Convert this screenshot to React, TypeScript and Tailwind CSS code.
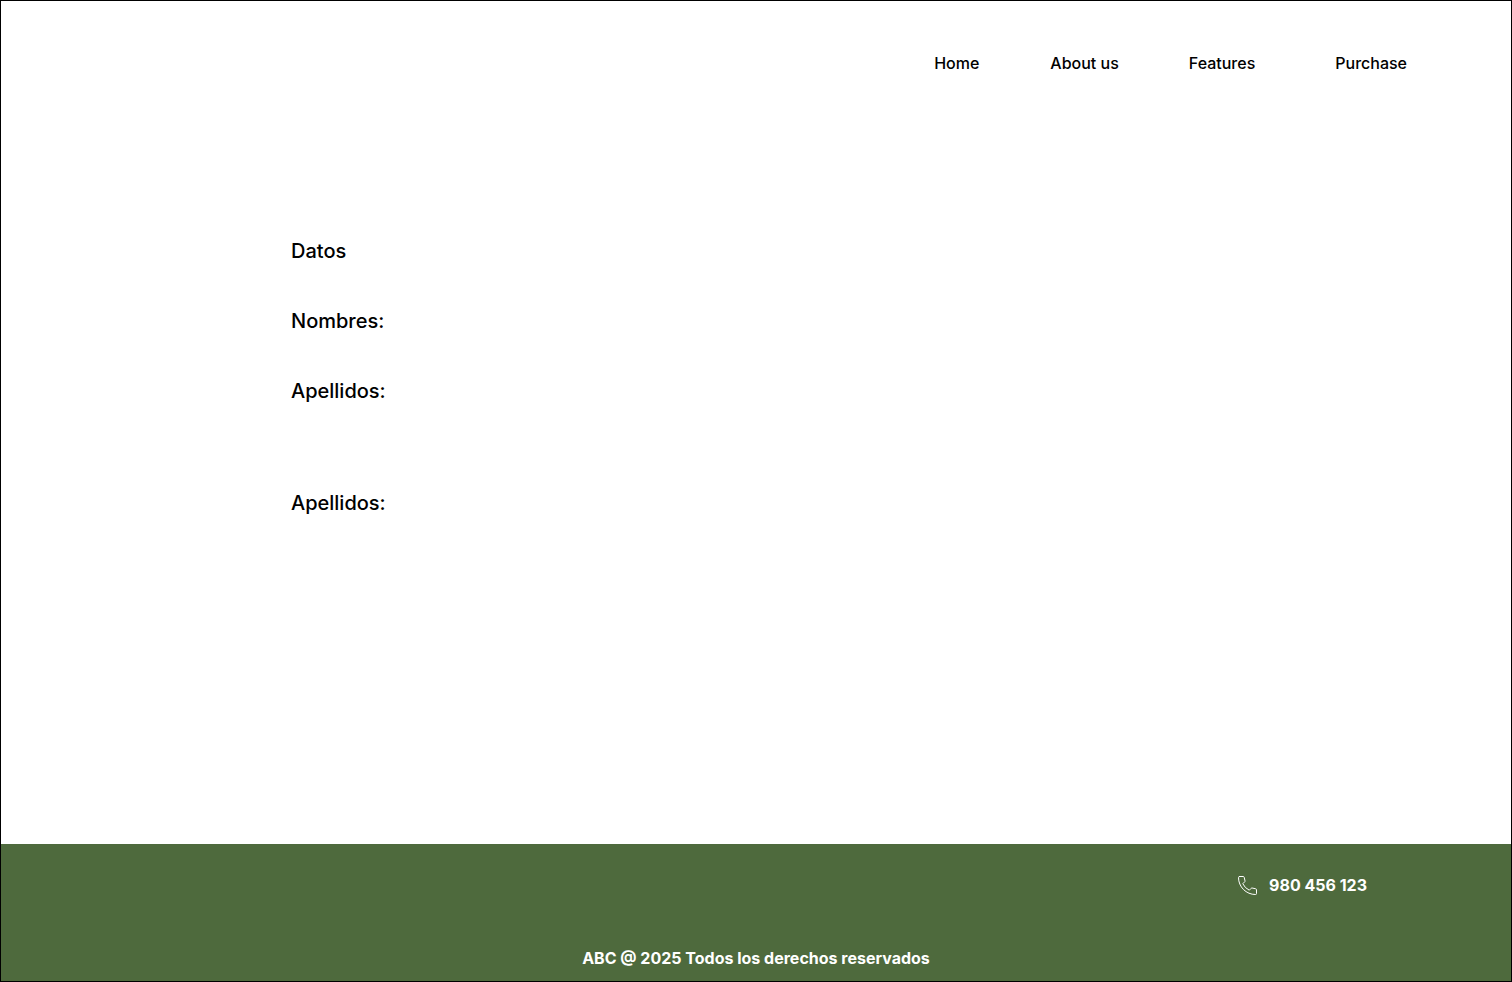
export default function App() {
  return (
    <div className="flex min-h-screen flex-col border border-black bg-white font-['Inter',sans-serif] text-black">
      <header className="flex justify-end pt-[50px] pr-[104px]">
        <nav aria-label="Main" className="flex text-base leading-6 font-medium">
          <a href="#home" className="mr-[71px]">Home</a>
          <a href="#about" className="mr-[70px]">About us</a>
          <a href="#features" className="mr-20">Features</a>
          <a href="#purchase">Purchase</a>
        </nav>
      </header>
      <main className="flex flex-1 flex-col gap-10 pt-[161px] pl-[290px] text-xl leading-[30px] font-medium">
        <h1>Datos</h1>
        <p>Nombres:</p>
        <p>Apellidos:</p>
        <p className="mt-[42px]">Apellidos:</p>
      </main>
      <footer className="flex h-[137px] flex-col justify-between bg-[#4e6a3d] pt-[29px] pb-[11px] text-base leading-6 font-bold text-white">
        <a href="tel:980456123" className="mr-[144px] flex items-center gap-[11px] self-end">
          <svg width="20" height="20" viewBox="0 0 20 20" fill="none" stroke="currentColor" strokeWidth="1" strokeLinecap="round" strokeLinejoin="round" aria-hidden="true">
            <path d="M1.5 1.5h3.7a1 1 0 0 1 1 .8l.8 3.6a1 1 0 0 1-.3.9L4.8 8.7a13.5 13.5 0 0 0 6.5 6.5l1.9-1.9a1 1 0 0 1 .9-.3l3.6.8a1 1 0 0 1 .8 1v3.7a1 1 0 0 1-1 1A17 17 0 0 1 .5 2.5a1 1 0 0 1 1-1Z" />
          </svg>
          980 456 123
        </a>
        <p className="text-center">ABC @ 2025 Todos los derechos reservados</p>
      </footer>
    </div>
  );
}
